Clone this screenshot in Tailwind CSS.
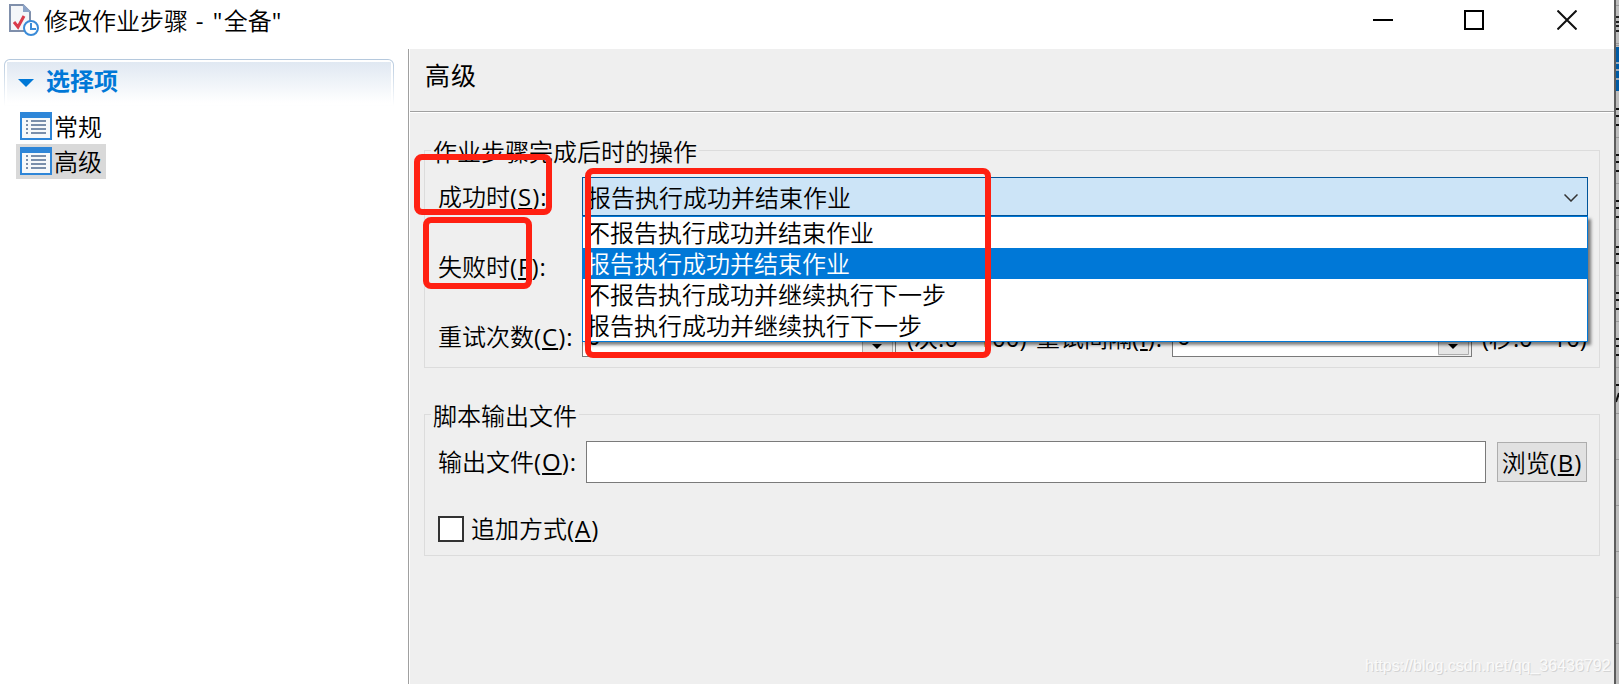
<!DOCTYPE html>
<html lang="zh-CN">
<head>
    <meta charset="UTF-8">
    <meta name="viewport" content="width=device-width, initial-scale=1.0">
    <title>修改作业步骤 - "全备"</title>
    <script src="https://cdn.jsdelivr.net/npm/@tailwindcss/browser@4"></script>
</head>
<body class="relative w-[1619px] h-[684px] overflow-hidden flex bg-white text-black text-[24px] leading-[31px] whitespace-nowrap font-[350] font-['Open_Sans','Noto_Sans_CJK_SC',sans-serif]">

    <!-- dialog window -->
    <div class="w-[1614px] h-full flex flex-col shrink-0">
        <header class="h-[49px] shrink-0 flex items-center justify-between pl-[8px] pr-[37px] pb-[9px]">
            <div class="flex items-center">
                <svg class="w-[32px] h-[34px] mr-[4px]" viewBox="0 0 32 34">
                    <path d="M2 2h13l7 7v19H2z" fill="#f4f6f9" stroke="#7f8fab" stroke-width="2"/>
                    <path d="M15 1l8 8h-8z" fill="#8ba3c7"/>
                    <path d="M6 19l4 5 6-11" fill="none" stroke="#d93a4a" stroke-width="3"/>
                    <circle cx="23" cy="25" r="7" fill="#fff" stroke="#3a8bd8" stroke-width="2"/>
                    <path d="M23 20v6h5" fill="none" stroke="#3a8bd8" stroke-width="2"/>
                </svg>
                <h1>修改作业步骤<span class="font-normal tracking-[1.5px]"> - "</span>全备<span class="font-normal">"</span></h1>
            </div>
            <div class="flex items-center">
                <svg class="w-[20px] h-[20px] mr-[71px]" viewBox="0 0 20 20"><path d="M0 10h20" stroke="#000" stroke-width="2"/></svg>
                <svg class="w-[20px] h-[20px] mr-[73px]" viewBox="0 0 20 20"><path d="M1 1h18v18H1z" fill="none" stroke="#000" stroke-width="2"/></svg>
                <svg class="w-[20px] h-[20px]" viewBox="0 0 20 20"><path d="M.5.5l19 19M19.500.5l-19 19" stroke="#111" stroke-width="2"/></svg>
            </div>
        </header>

        <div class="flex flex-1">
            <!-- page list -->
            <aside class="w-[408px] shrink-0 pt-[10px] pl-[4px]">
                <div class="w-[390px] h-[47px] rounded-t-md p-px bg-linear-to-b from-[#b4c8dd] to-white">
                    <div class="h-full rounded-t-[5px] bg-white p-[2px]">
                        <div class="h-full flex items-center pl-[11px] pb-[4px] bg-linear-to-b from-[#e0e8f2] to-white text-[#0078d7] font-bold">
                            <svg class="w-[16px] h-[8px] mt-[4px] mr-[12px]" viewBox="0 0 16 8"><path d="M0 0h16L8 8z" fill="#0078d7"/></svg>
                            选择项
                        </div>
                    </div>
                </div>
                <ul class="ml-[12px] mt-[3px] w-[90px]">
                    <li class="h-[35px] flex items-center pl-[4px]">
                        <svg class="w-[32px] h-[28px] mr-[2px] -mt-[2px]" viewBox="0 0 32 28">
                            <path d="M0 0h32v28H0z" fill="#2e86d8"/><path d="M2 6h28v20H2z" fill="#f7f9fa"/>
                            <path d="M6 9h2M6 13h2M6 17h2M6 21h2M11 9h15M11 13h15M11 17h15M11 21h15" stroke="#7a8fab" stroke-width="2"/>
                        </svg>
                        常规
                    </li>
                    <li class="h-[35px] flex items-center pl-[4px] bg-[#d9d9d9]">
                        <svg class="w-[32px] h-[28px] mr-[2px] -mt-[2px]" viewBox="0 0 32 28">
                            <path d="M0 0h32v28H0z" fill="#2e86d8"/><path d="M2 6h28v20H2z" fill="#f7f9fa"/>
                            <path d="M6 9h2M6 13h2M6 17h2M6 21h2M11 9h15M11 13h15M11 17h15M11 21h15" stroke="#7a8fab" stroke-width="2"/>
                        </svg>
                        高级
                    </li>
                </ul>
            </aside>

            <main class="flex-1 border-l border-[#a0a0a0] bg-white pl-px flex flex-col">
                <div class="h-[63px] shrink-0 bg-[#efefef] border-b border-[#a0a0a0] pl-[15px] pt-[11px] text-[25px] font-normal tracking-[1px]">高级</div>
                <div class="flex-1 mt-px bg-[#efefef] pl-[14px]">

                    <fieldset class="relative w-[1176px] h-[233px] mt-[22px] border border-[#dcdcdc] pl-[13px] pr-[10px]">
                        <legend class="h-[31px] -ml-[7px] px-[2px] pt-px">作业步骤完成后时的操作</legend>
                        <div class="h-[39px] mt-[11px] flex items-center">
                            <label class="w-[144px]">成功时<span class="font-normal tracking-[1px]">(<u class="underline-offset-2">S</u>):</span></label>
                            <div class="relative w-[1006px] h-[39px] border border-[#005499] bg-[#cce4f7] flex items-center justify-between pl-[4px] pr-[9px]">
                                <span class="pt-px">报告执行成功并结束作业</span>
                                <svg class="w-[14px] h-[8px] mt-[2px]" viewBox="0 0 14 8"><path d="M.5.5L7 7 13.500.5" fill="none" stroke="#333" stroke-width="1.500"/></svg>
                                <!-- open list -->
                                <ul class="absolute z-10 -left-px top-[38px] w-[1006px] border border-[#0078d7] bg-white shadow-[3px_3px_3px_rgba(0,0,0,0.5)]">
                                    <li class="h-[31px] pl-[3px]">不报告执行成功并结束作业</li>
                                    <li class="h-[31px] pl-[3px] bg-[#0078d7] text-white">报告执行成功并结束作业</li>
                                    <li class="h-[31px] pl-[3px]">不报告执行成功并继续执行下一步</li>
                                    <li class="h-[31px] pl-[3px]">报告执行成功并继续执行下一步</li>
                                </ul>
                            </div>
                        </div>
                        <div class="h-[39px] mt-[31px] flex items-center"><label>失败时<span class="font-normal tracking-[1px]">(<u class="underline-offset-2">F</u>):</span></label></div>
                        <div class="h-[39px] mt-[32px] flex items-center">
                            <label class="w-[144px] pb-[2px]">重试次数<span class="font-normal tracking-[1px]">(<u class="underline-offset-2">C</u>):</span></label>
                            <div class="w-[314px] h-[39px] border border-[#7a7a7a] bg-white flex justify-between pl-[4px] leading-[34px] font-normal">0
                                <svg class="w-[33px] h-[37px]" viewBox="0 0 33 37"><path d="M0 0h33v38H0z" fill="#efefef"/><path d="M.5.500h30v35H.5z" fill="#e5e5e5" stroke="#acacac"/><path d="M10 25h10l-5 5z"/></svg>
                            </div>
                            <span class="w-[129px] pl-[11px] pb-px font-normal">(次:0 - 100)</span>
                            <label class="w-[147px] pl-[11px] pb-px">重试间隔<span class="font-normal tracking-[1px]">(<u class="underline-offset-2">I</u>):</span></label>
                            <div class="w-[300px] h-[39px] border border-[#7a7a7a] bg-white flex justify-between pl-[4px] leading-[34px] font-normal">0
                                <svg class="w-[33px] h-[37px]" viewBox="0 0 33 37"><path d="M0 0h33v38H0z" fill="#efefef"/><path d="M.5.500h30v35H.5z" fill="#e5e5e5" stroke="#acacac"/><path d="M10 25h10l-5 5z"/></svg>
                            </div>
                            <span class="pl-[10px] pb-px font-normal tracking-[-0.1px]">(秒:0 - 10)</span>
                        </div>
                    </fieldset>

                    <fieldset class="w-[1176px] h-[157px] mt-[31px] border border-[#dcdcdc] pl-[13px]">
                        <legend class="h-[31px] -ml-[7px] px-[2px] pt-px">脚本输出文件</legend>
                        <div class="mt-[11px] h-[42px] flex items-center">
                            <label class="w-[148px] pb-[2px]">输出文件<span class="font-normal tracking-[1px]">(<u class="underline-offset-2">O</u>):</span></label>
                            <div class="w-[900px] h-[42px] border border-[#7a7a7a] bg-white"></div>
                            <button class="w-[90px] h-[40px] ml-[11px] border border-[#adadad] bg-[#e1e1e1]">浏览<span class="font-normal tracking-[1px]">(<u class="underline-offset-2">B</u>)</span></button>
                        </div>
                        <div class="mt-[30px] h-[31px] flex items-center">
                            <span class="w-[26px] h-[26px] border-2 border-[#333] bg-white mr-[7px]"></span>
                            <label>追加方式<span class="font-normal tracking-[1px]">(<u class="underline-offset-2">A</u>)</span></label>
                        </div>
                    </fieldset>
                </div>
            </main>
        </div>
    </div>

    <!-- window behind the dialog -->
    <div class="w-[5px] h-full shrink-0 bg-[#bdbdbd] border-l-2 border-[#5c5c5c] overflow-hidden">
        <svg class="w-[3px] h-[684px]" viewBox="0 0 3 684">
            <path d="M0 5.500h3M0 43.500h3M0 45.500h3M0 137.500h3M0 183.500h3M0 229.500h3M0 275.500h3M0 321.500h3M0 367.500h3M0 413.500h3M0 459.500h3M0 505.500h3M0 551.500h3M0 597.500h3M0 643.500h3" stroke="#999"/>
            <path d="M0 17h3M0 22h3M0 26h3M0 31h3" stroke="#222" stroke-width="2"/>
            <path d="M0 47h3v44H0z" fill="#005ba4"/>
            <path d="M0 63h3M0 70h3M0 79h3" stroke="#9ab" stroke-width="2"/>
            <path d="M0 109h3M0 116h3M0 125h3M0 155h3M0 162h3M0 171h3M0 201h3M0 208h3M0 217h3M0 247h3M0 254h3M0 263h3M0 293h3M0 300h3M0 309h3M0 339h3M0 346h3M0 355h3M0 385h3" stroke="#111" stroke-width="2"/>
            <path d="M0 402l3-9" stroke="#111" stroke-width="2"/>
        </svg>
    </div>

    <!-- annotation frames -->
    <div class="absolute z-20 left-[414px] top-[154px] w-[138px] h-[61px] border-6 border-[#ff2012] rounded-lg"></div>
    <div class="absolute z-20 left-[423px] top-[217px] w-[109px] h-[72px] border-6 border-[#ff2012] rounded-lg"></div>
    <div class="absolute z-20 left-[585px] top-[168px] w-[406px] h-[190px] border-6 border-[#ff2012] rounded-lg"></div>

    <p class="absolute left-[1365px] top-[656px] text-[16px] leading-[20px] text-[#fafafa] font-normal font-['Liberation_Sans',sans-serif] [text-shadow:1px_1px_0_#d4d4d4]">https://blog.csdn.net/qq_36436792</p>
</body>
</html>
